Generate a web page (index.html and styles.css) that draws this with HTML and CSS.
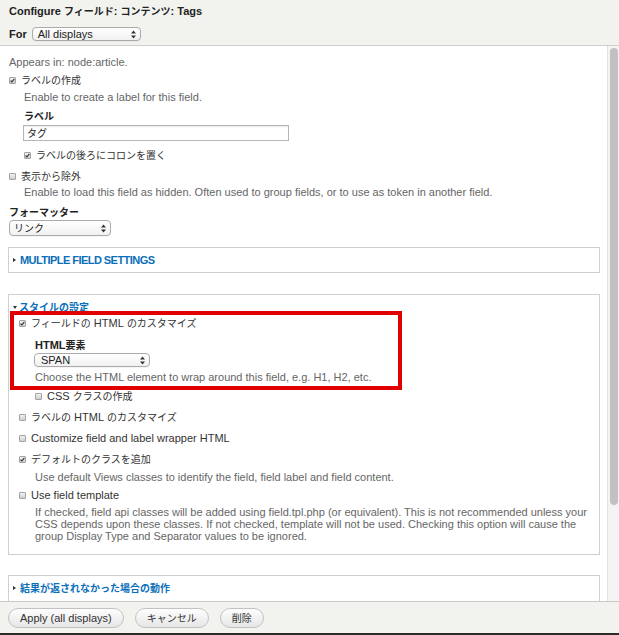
FILE: index.html
```
<!DOCTYPE html>
<html lang="ja">
<head>
<meta charset="utf-8">
<title>Configure field</title>
<link rel="stylesheet" href="styles.css">
</head>
<body>
<div class="app">
  <header class="head">
    <h1 class="title">Configure <span class="j">フィールド</span>: <span class="j">コンテンツ</span>: Tags</h1>
    <div class="for">
      <span>For</span>
      <div class="sel sel-displays"><span>All displays</span><svg class="arr" width="5" height="9" viewBox="0 0 5 9"><path d="M0 3.6 L2.5 0.4 L5 3.6 Z M0 5.4 L2.5 8.6 L5 5.4 Z" fill="#333"/></svg></div>
    </div>
  </header>

  <div class="body">
    <main class="scroll">
      <div class="top">
        <div class="line muted m9">Appears in: node:article.</div>
        <div class="line check m4"><span class="cb on"><svg width="5" height="5" viewBox="0 0 5 5"><path d="M0.6 2.6 L1.9 3.9 L4.4 0.9" fill="none" stroke="#333" stroke-width="1.1"/></svg></span><span class="j">ラベルの作成</span></div>
        <div class="line muted m3 ind">Enable to create a label for this field.</div>
        <div class="line strong m5 ind"><span class="j">ラベル</span></div>
        <div class="input m2"><span class="j">タグ</span></div>
        <div class="line check m7 ind"><span class="cb on"><svg width="5" height="5" viewBox="0 0 5 5"><path d="M0.6 2.6 L1.9 3.9 L4.4 0.9" fill="none" stroke="#333" stroke-width="1.1"/></svg></span><span class="j">ラベルの後ろにコロンを置く</span></div>
        <div class="line check m7"><span class="cb"></span><span class="j">表示から除外</span></div>
        <div class="line muted m2 ind">Enable to load this field as hidden. Often used to group fields, or to use as token in another field.</div>
        <div class="line strong m6"><span class="j">フォーマッター</span></div>
        <div class="sel sel-fmt m1"><span class="j">リンク</span><svg class="arr" width="5" height="9" viewBox="0 0 5 9"><path d="M0 3.6 L2.5 0.4 L5 3.6 Z M0 5.4 L2.5 8.6 L5 5.4 Z" fill="#333"/></svg></div>
      </div>

      <section class="fs fs1">
        <div class="legend"><span class="tri-r"></span><span class="legend-en">MULTIPLE FIELD SETTINGS</span></div>
      </section>

      <section class="fs fs2">
        <div class="legend"><span class="tri-d"></span><span class="j">スタイルの設定</span></div>
        <div class="fs-body">
          <div class="line check m2"><span class="cb on"><svg width="5" height="5" viewBox="0 0 5 5"><path d="M0.6 2.6 L1.9 3.9 L4.4 0.9" fill="none" stroke="#333" stroke-width="1.1"/></svg></span><span class="j">フィールドの</span>&nbsp;HTML&nbsp;<span class="j">のカスタマイズ</span></div>
          <div class="line strong m8 sub">HTML<span class="j">要素</span></div>
          <div class="sel sel-html m1">SPAN<svg class="arr" width="5" height="9" viewBox="0 0 5 9"><path d="M0 3.6 L2.5 0.4 L5 3.6 Z M0 5.4 L2.5 8.6 L5 5.4 Z" fill="#333"/></svg></div>
          <div class="line muted m3 sub">Choose the HTML element to wrap around this field, e.g. H1, H2, etc.</div>
          <div class="line check m5 sub"><span class="cb"></span>CSS&nbsp;<span class="j">クラスの作成</span></div>
          <div class="line check m7"><span class="cb"></span><span class="j">ラベルの</span>&nbsp;HTML&nbsp;<span class="j">のカスタマイズ</span></div>
          <div class="line check m7"><span class="cb"></span>Customize field and label wrapper HTML</div>
          <div class="line check m7"><span class="cb on"><svg width="5" height="5" viewBox="0 0 5 5"><path d="M0.6 2.6 L1.9 3.9 L4.4 0.9" fill="none" stroke="#333" stroke-width="1.1"/></svg></span><span class="j">デフォルトのクラスを追加</span></div>
          <div class="line muted m4 sub">Use default Views classes to identify the field, field label and field content.</div>
          <div class="line check m4"><span class="cb"></span>Use field template</div>
          <p class="para muted m4 sub">If checked, field api classes will be added using field.tpl.php (or equivalent). This is not recommended unless your<br>CSS depends upon these classes. If not checked, template will not be used. Checking this option will cause the<br>group Display Type and Separator values to be ignored.</p>
        </div>
        <div class="highlight"></div>
      </section>

      <section class="fs fs3">
        <div class="legend"><span class="tri-r"></span><span class="j">結果が返されなかった場合の動作</span></div>
      </section>
    </main>
    <div class="scrollbar"><div class="thumb"></div></div>
  </div>

  <footer class="foot">
    <button class="btn">Apply (all displays)</button>
    <button class="btn"><span class="j">キャンセル</span></button>
    <button class="btn"><span class="j">削除</span></button>
  </footer>
  <div class="taskbar"></div>
</div>
</body>
</html>
```
FILE: styles.css
```
* { box-sizing: border-box; }
html, body { margin: 0; padding: 0; }
body {
  width: 619px;
  height: 635px;
  overflow: hidden;
  font-family: "Liberation Sans", "Noto Sans CJK JP", sans-serif;
  font-size: 11px;
  color: #333;
  background: #fff;
}
.j { font-family: "Noto Sans CJK JP", "Liberation Sans", sans-serif; font-size: 10px; }

.app { display: flex; flex-direction: column; height: 635px; }

/* header */
.head {
  height: 46px;
  flex: none;
  background: #f2f2ee;
  border-bottom: 1px solid #cfcfcb;
  padding: 4px 0 0 9px;
}
.title { margin: 0; font-size: 11px; font-weight: bold; line-height: 14px; color: #222; white-space: nowrap; }
.for { display: flex; align-items: center; gap: 5px; margin-top: 9px; font-weight: bold; color: #222; }

/* select lookalike */
.sel {
  display: flex;
  align-items: center;
  justify-content: space-between;
  height: 14px;
  border: 1px solid #ababab;
  border-radius: 4px;
  background: linear-gradient(#ffffff, #f1f1f1);
  padding: 0 4px 0 5px;
  font-weight: normal;
  color: #222;
  font-size: 11px;
  line-height: 12px;
  box-shadow: 0 1px 0 rgba(0,0,0,0.04);
}
.arr { flex: none; }
.sel-displays { width: 109px; }
.sel-fmt { width: 102px; height: 16px; padding-left: 4px; }
.sel-html { width: 116px; margin-left: 15px; padding-left: 6px; }

/* body */
.body { display: flex; height: 555px; flex: none; }
.scroll { width: 607px; overflow: hidden; padding: 0 7px 0 8px; }
.scrollbar {
  width: 12px;
  background: #f4f4f4;
  border-left: 1px solid #e2e2e2;
  padding: 2px 0 0 2px;
}
.thumb { width: 8px; height: 457px; background: #c1c1c1; border-radius: 4px; }

.top { padding-left: 1px; }
.line { line-height: 14px; height: 14px; white-space: nowrap; }
.check { display: flex; align-items: center; }
.muted { color: #666; }
.strong { font-weight: bold; color: #222; }
.ind { margin-left: 15px; }
.sub { margin-left: 16px; }
.m1 { margin-top: 1px; } .m2 { margin-top: 2px; } .m3 { margin-top: 3px; }
.m4 { margin-top: 4px; } .m5 { margin-top: 5px; } .m6 { margin-top: 6px; }
.m7 { margin-top: 7px; } .m8 { margin-top: 8px; } .m9 { margin-top: 9px; }

.cb {
  width: 7px;
  height: 7px;
  flex: none;
  border: 1px solid #a3a3a3;
  border-radius: 1px;
  background: linear-gradient(#f2f2f2, #cfcfcf);
  margin-right: 5px;
  display: flex;
  align-items: center;
  justify-content: center;
}
.cb svg { display: block; }

.input {
  width: 266px;
  height: 16px;
  margin-left: 14px;
  border: 1px solid #b5b5b5;
  box-shadow: inset 0 1px 1px rgba(0,0,0,0.08);
  background: #fff;
  padding-left: 3px;
  line-height: 14px;
  color: #222;
}

/* fieldsets */
.fs { border: 1px solid #cfcfcf; position: relative; }
.fs1 { margin-top: 11px; height: 26px; padding-top: 5px; }
.fs2 { margin-top: 21px; padding: 5px 0 12px 0; }
.fs3 { margin-top: 20px; height: 40px; padding-top: 5px; }
.legend {
  display: flex;
  align-items: center;
  height: 14px;
  line-height: 14px;
  padding-left: 4px;
  font-weight: bold;
  color: #0b6fba;
  white-space: nowrap;
}
.legend-en { font-size: 11px; letter-spacing: -0.55px; }
.tri-r {
  width: 0; height: 0;
  border-left: 3px solid #333;
  border-top: 2.5px solid transparent;
  border-bottom: 2.5px solid transparent;
  margin-right: 4px;
}
.tri-d {
  width: 0; height: 0;
  border-top: 3px solid #333;
  border-left: 2.5px solid transparent;
  border-right: 2.5px solid transparent;
  margin-right: 2px;
}
.fs-body { padding-left: 10px; }
.para { margin-bottom: 0; line-height: 12px; white-space: nowrap; }

.highlight {
  position: absolute;
  left: 1px;
  top: 16px;
  width: 392px;
  height: 79px;
  border: 4px solid #e00000;
  pointer-events: none;
}

/* footer */
.foot {
  height: 32px;
  flex: none;
  background: #f2f2ee;
  border-top: 1px solid #c9c9c5;
  padding: 6px 0 0 8px;
  display: flex;
  align-items: flex-start;
  gap: 11px;
}
.btn {
  height: 20px;
  padding: 0 11px;
  border-radius: 10px;
  border: 1px solid #c2c2c2;
  background: linear-gradient(#fefefe, #e6e6e6);
  font-family: "Liberation Sans", "Noto Sans CJK JP", sans-serif;
  font-size: 11px;
  line-height: 18px;
  color: #333;
  margin: 0;
}
.taskbar { height: 2px; flex: none; background: #2b2b2b; }
```
